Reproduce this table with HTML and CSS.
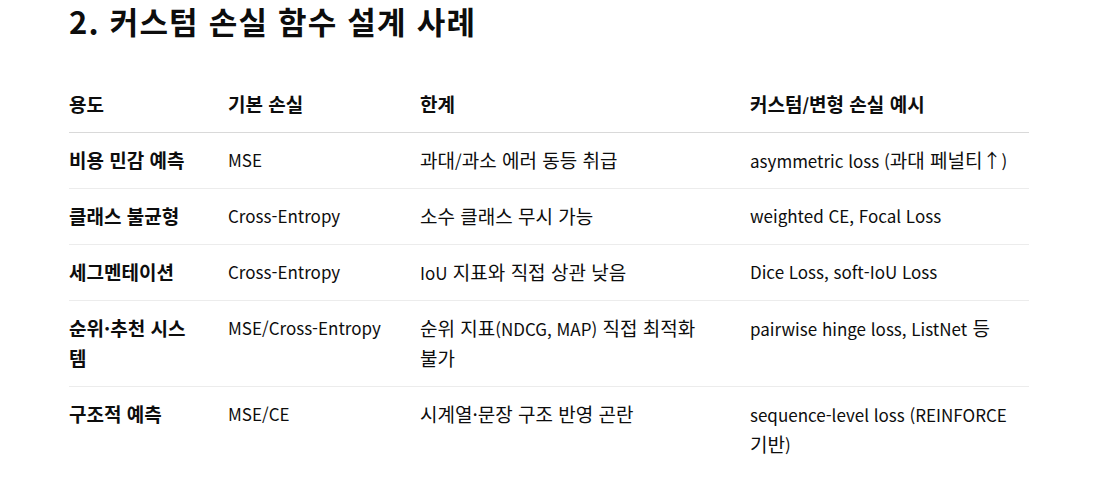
FILE: index.html
```html
<!DOCTYPE html>
<html lang="ko">
<head>
<meta charset="utf-8">
<link rel="stylesheet" href="styles.css">
</head>
<body>
<main class="doc">
  <h2 class="title">2. 커스텀 손실 함수 설계 사례</h2>
  <table class="loss-table">
    <colgroup>
      <col class="c1"><col class="c2"><col class="c3"><col class="c4">
    </colgroup>
    <thead>
      <tr><th>용도</th><th>기본 손실</th><th>한계</th><th>커스텀<span class="en">/</span>변형 손실 예시</th></tr>
    </thead>
    <tbody>
      <tr><td class="name">비용 민감 예측</td><td class="en">MSE</td><td>과대<span class="en">/</span>과소 에러 동등 취급</td><td><span class="en">asymmetric loss (</span>과대 페널티↑<span class="en">)</span></td></tr>
      <tr><td class="name">클래스 불균형</td><td class="en">Cross-Entropy</td><td>소수 클래스 무시 가능</td><td class="en">weighted CE, Focal Loss</td></tr>
      <tr><td class="name">세그멘테이션</td><td class="en">Cross-Entropy</td><td><span class="en">IoU</span> 지표와 직접 상관 낮음</td><td class="en">Dice Loss, soft-IoU Loss</td></tr>
      <tr><td class="name">순위·추천 시스템</td><td class="en">MSE/Cross-Entropy</td><td>순위 지표<span class="en">(NDCG, MAP)</span> 직접 최적화 불가</td><td><span class="en">pairwise hinge loss, ListNet</span> 등</td></tr>
      <tr><td class="name">구조적 예측</td><td class="en">MSE/CE</td><td>시계열·문장 구조 반영 곤란</td><td><span class="en">sequence-level loss (REINFORCE</span> 기반<span class="en">)</span></td></tr>
    </tbody>
  </table>
</main>
</body>
</html>
```

FILE: styles.css
```css
html, body {
  margin: 0;
  padding: 0;
  background: #ffffff;
}
body {
  font-family: "Noto Sans CJK KR", "Noto Sans", sans-serif;
  color: #0d0d0d;
}
.doc {
  width: 960px;
  margin-left: 69px;
}
.title {
  margin: 0;
  padding-top: 1px;
  font-size: 31px;
  line-height: 40px;
  letter-spacing: 1.2px;
  font-weight: 700;
}
.loss-table {
  margin-top: 36px;
  width: 960px;
  border-collapse: collapse;
  table-layout: fixed;
}
.c1 { width: 143px; }
.c2 { width: 192px; }
.c3 { width: 330px; }
.c4 { width: 295px; }
.loss-table th,
.loss-table td {
  text-align: left;
  vertical-align: top;
  padding: 12px 16px 13px 16px;
  line-height: 30px;
  font-size: 19px;
  word-break: keep-all;
}
.loss-table td.name {
  word-break: normal;
  font-weight: 700;
}
.loss-table th:first-child,
.loss-table td:first-child {
  padding-left: 0;
}
.loss-table th:last-child,
.loss-table td:last-child {
  padding-right: 0;
}
.loss-table th {
  font-weight: 700;
  border-bottom: 1px solid #d9d9d9;
}
.loss-table td {
  border-bottom: 1px solid #ececec;
}
.loss-table tbody tr:last-child td {
  border-bottom: none;
}
.loss-table .en {
  font-size: 17px;
}
span.en {
  line-height: 20px;
}
```
